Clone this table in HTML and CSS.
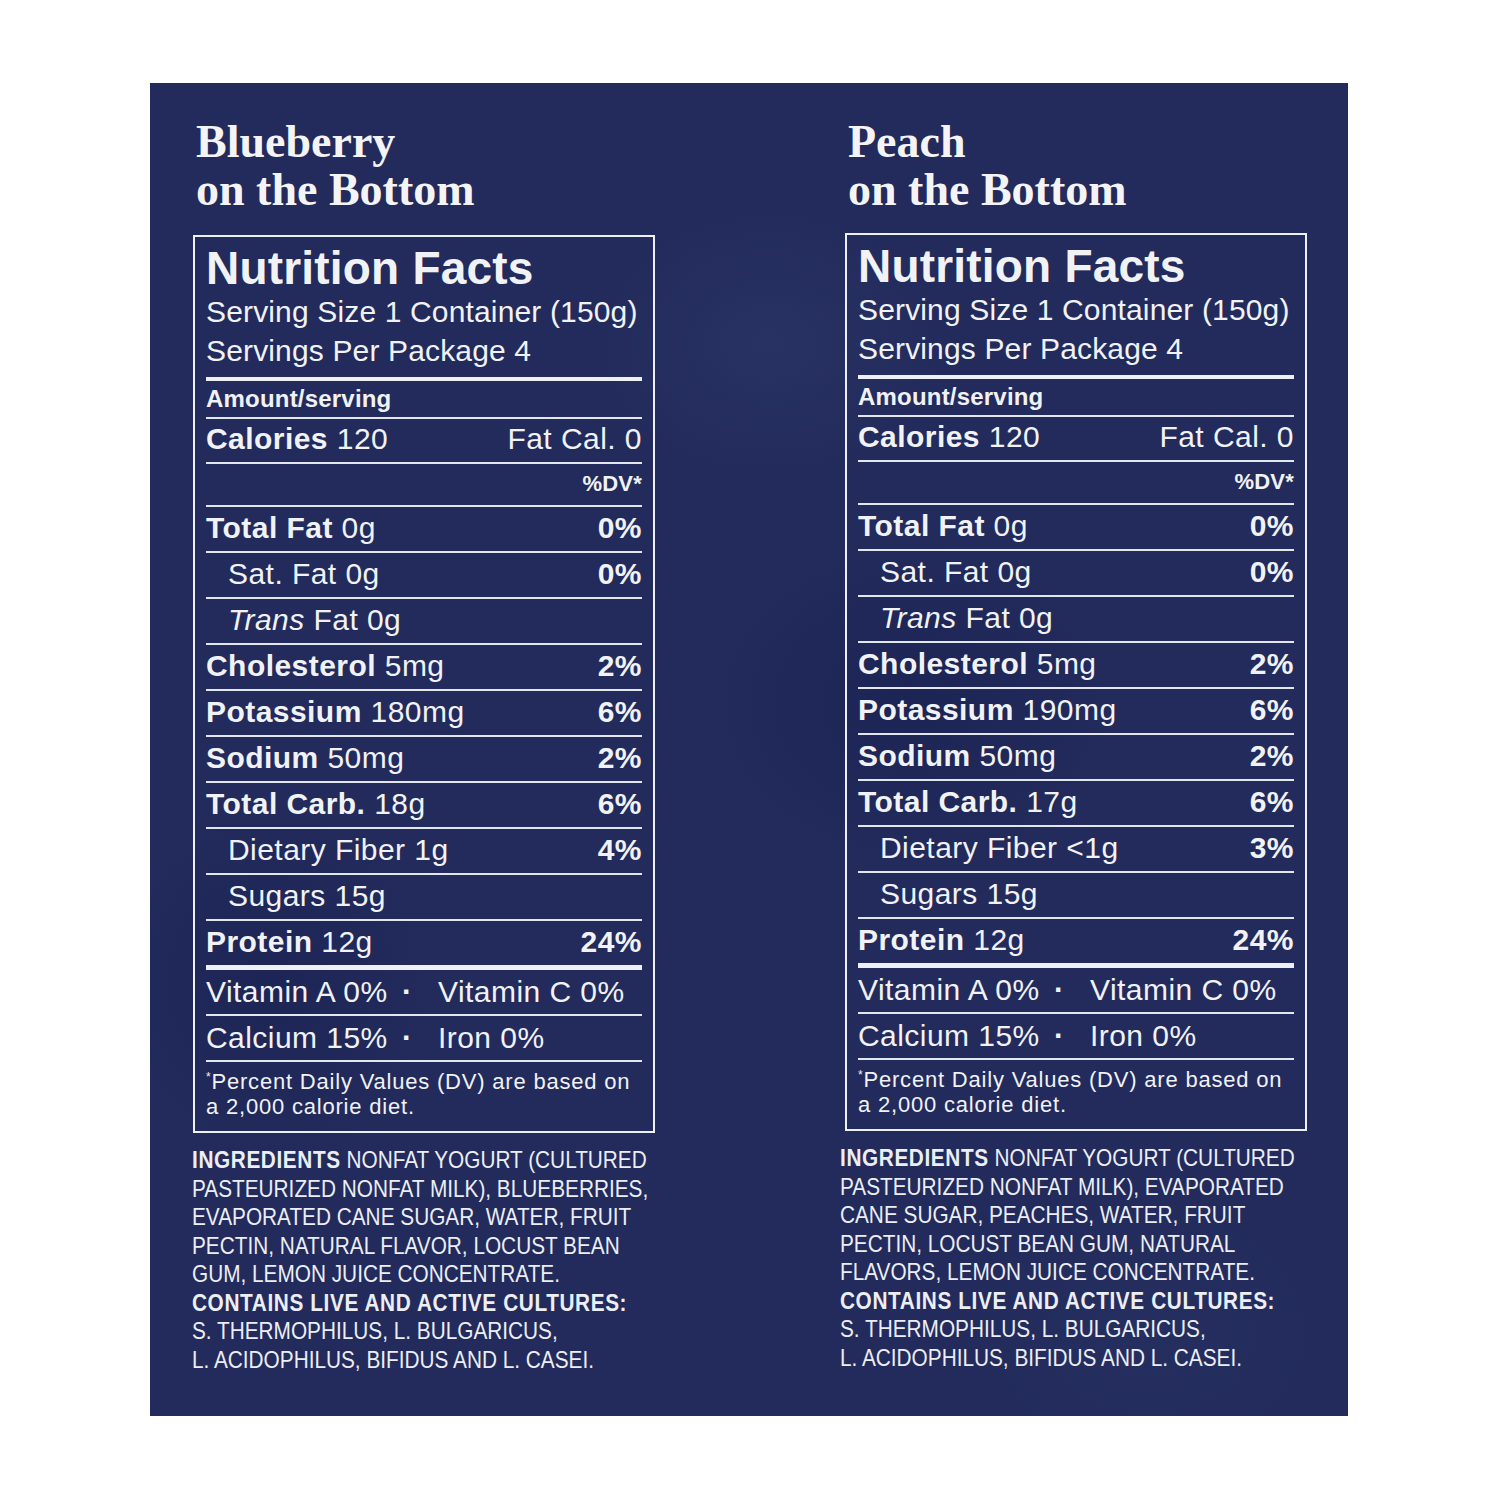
FILE: index.html
```html
<!DOCTYPE html>
<html lang="en">
<head>
<meta charset="utf-8">
<title>Nutrition Facts</title>
<link rel="stylesheet" href="styles.css">
</head>
<body>
<main class="panel">
  <section class="col">
    <h2 class="flavor">Blueberry<br>on the Bottom</h2>
    <div class="box">
      <h3 class="nf-title">Nutrition Facts</h3>
      <div class="serving">Serving Size 1 Container (150g)<br>Servings Per Package 4</div>
      <div class="row amount"><strong>Amount/serving</strong></div>
      <div class="row calories"><span><strong>Calories</strong> 120</span><span>Fat Cal. 0</span></div>
      <div class="row dv"><strong>%DV*</strong></div>
      <div class="row"><span><strong>Total Fat</strong> 0g</span><strong>0%</strong></div>
      <div class="row ind"><span>Sat. Fat 0g</span><strong>0%</strong></div>
      <div class="row ind"><span><em>Trans</em> Fat 0g</span></div>
      <div class="row"><span><strong>Cholesterol</strong> 5mg</span><strong>2%</strong></div>
      <div class="row"><span><strong>Potassium</strong> 180mg</span><strong>6%</strong></div>
      <div class="row"><span><strong>Sodium</strong> 50mg</span><strong>2%</strong></div>
      <div class="row"><span><strong>Total Carb.</strong> 18g</span><strong>6%</strong></div>
      <div class="row ind"><span>Dietary Fiber 1g</span><strong>4%</strong></div>
      <div class="row ind"><span>Sugars 15g</span></div>
      <div class="row protein"><span><strong>Protein</strong> 12g</span><strong>24%</strong></div>
      <div class="row vit"><span>Vitamin A 0%</span><span class="dot">·</span><span>Vitamin C 0%</span></div>
      <div class="row vit"><span>Calcium 15%</span><span class="dot">·</span><span>Iron 0%</span></div>
      <p class="foot"><sup>*</sup>Percent Daily Values (DV) are based on<br>a 2,000 calorie diet.</p>
    </div>
    <p class="ingr"><strong>INGREDIENTS</strong> NONFAT YOGURT (CULTURED<br>PASTEURIZED NONFAT MILK), BLUEBERRIES,<br>EVAPORATED CANE SUGAR, WATER, FRUIT<br>PECTIN, NATURAL FLAVOR, LOCUST BEAN<br>GUM, LEMON JUICE CONCENTRATE.<br><strong>CONTAINS LIVE AND ACTIVE CULTURES:</strong><br>S. THERMOPHILUS, L. BULGARICUS,<br>L. ACIDOPHILUS, BIFIDUS AND L. CASEI.</p>
  </section>

  <section class="col col-right">
    <h2 class="flavor">Peach<br>on the Bottom</h2>
    <div class="box">
      <h3 class="nf-title">Nutrition Facts</h3>
      <div class="serving">Serving Size 1 Container (150g)<br>Servings Per Package 4</div>
      <div class="row amount"><strong>Amount/serving</strong></div>
      <div class="row calories"><span><strong>Calories</strong> 120</span><span>Fat Cal. 0</span></div>
      <div class="row dv"><strong>%DV*</strong></div>
      <div class="row"><span><strong>Total Fat</strong> 0g</span><strong>0%</strong></div>
      <div class="row ind"><span>Sat. Fat 0g</span><strong>0%</strong></div>
      <div class="row ind"><span><em>Trans</em> Fat 0g</span></div>
      <div class="row"><span><strong>Cholesterol</strong> 5mg</span><strong>2%</strong></div>
      <div class="row"><span><strong>Potassium</strong> 190mg</span><strong>6%</strong></div>
      <div class="row"><span><strong>Sodium</strong> 50mg</span><strong>2%</strong></div>
      <div class="row"><span><strong>Total Carb.</strong> 17g</span><strong>6%</strong></div>
      <div class="row ind"><span>Dietary Fiber &lt;1g</span><strong>3%</strong></div>
      <div class="row ind"><span>Sugars 15g</span></div>
      <div class="row protein"><span><strong>Protein</strong> 12g</span><strong>24%</strong></div>
      <div class="row vit"><span>Vitamin A 0%</span><span class="dot">·</span><span>Vitamin C 0%</span></div>
      <div class="row vit"><span>Calcium 15%</span><span class="dot">·</span><span>Iron 0%</span></div>
      <p class="foot"><sup>*</sup>Percent Daily Values (DV) are based on<br>a 2,000 calorie diet.</p>
    </div>
    <p class="ingr"><strong>INGREDIENTS</strong> NONFAT YOGURT (CULTURED<br>PASTEURIZED NONFAT MILK), EVAPORATED<br>CANE SUGAR, PEACHES, WATER, FRUIT<br>PECTIN, LOCUST BEAN GUM, NATURAL<br>FLAVORS, LEMON JUICE CONCENTRATE.<br><strong>CONTAINS LIVE AND ACTIVE CULTURES:</strong><br>S. THERMOPHILUS, L. BULGARICUS,<br>L. ACIDOPHILUS, BIFIDUS AND L. CASEI.</p>
  </section>
</main>
</body>
</html>
```

FILE: styles.css
```css
* { box-sizing: border-box; }

html, body {
  margin: 0;
  padding: 0;
  background: #ffffff;
}

body {
  font-family: "Liberation Sans", Arial, sans-serif;
  color: #f1f2f6;
}

.panel {
  margin: 83px 0 0 150px;
  width: 1198px;
  height: 1333px;
  padding: 35px 0 0 43px;
  display: flex;
  gap: 190px;
  background-color: #222b5b;
  background-image:
    radial-gradient(ellipse 260px 200px at 620px 260px, rgba(50, 62, 112, 0.4), transparent 70%),
    radial-gradient(ellipse 300px 240px at 760px 620px, rgba(16, 24, 72, 0.35), transparent 70%),
    radial-gradient(ellipse 280px 220px at 1000px 1250px, rgba(44, 56, 104, 0.3), transparent 70%),
    radial-gradient(ellipse 240px 260px at 120px 900px, rgba(18, 26, 74, 0.35), transparent 70%);
}

.col {
  width: 462px;
  display: flex;
  flex-direction: column;
}

.flavor {
  margin: 0 0 21px 3px;
  font-family: "Liberation Serif", "Times New Roman", serif;
  font-weight: 700;
  font-size: 46px;
  line-height: 48px;
  color: #f4f4f6;
}

.box {
  border: 2px solid #eef0f5;
  padding: 8px 11px 0 11px;
}

.col-right .box {
  margin-top: -2px;
}

.nf-title {
  margin: 0;
  font-weight: 700;
  font-size: 46px;
  line-height: 46px;
  letter-spacing: 0.2px;
}

.serving {
  margin-top: 1px;
  font-size: 30px;
  line-height: 39px;
  letter-spacing: 0.15px;
  padding-bottom: 7px;
  border-bottom: 4px solid #eef0f5;
}

.row {
  display: flex;
  justify-content: space-between;
  align-items: baseline;
  font-size: 30px;
  line-height: 42px;
  letter-spacing: 0.45px;
  padding-bottom: 2px;
  border-bottom: 2px solid #e4e6ee;
  white-space: nowrap;
}

.row strong { font-weight: 700; }

.row em { font-style: italic; }

.ind { padding-left: 22px; }

.amount {
  font-size: 24px;
  line-height: 36px;
  letter-spacing: 0.2px;
  padding-bottom: 0;
}

.calories {
  line-height: 40px;
  padding-bottom: 3px;
}

.dv {
  justify-content: flex-end;
  font-size: 22px;
  line-height: 40px;
  letter-spacing: 0.2px;
  padding-bottom: 1px;
}

.protein {
  border-bottom-width: 5px;
  border-bottom-color: #eef0f5;
}

.vit {
  display: grid;
  grid-template-columns: 196px 36px 1fr;
  justify-content: start;
  align-items: start;
  line-height: 44px;
  padding-bottom: 0;
}

.dot {
  font-weight: 700;
  font-size: 30px;
}

.foot {
  margin: 0;
  padding: 7px 0 12px 0;
  font-size: 22px;
  line-height: 25px;
  letter-spacing: 0.8px;
  white-space: nowrap;
}

.foot sup {
  font-size: 12px;
  vertical-align: 8px;
  line-height: 0;
}

.ingr {
  margin: 13px 0 0 -1px;
  font-family: "Liberation Sans", Arial, sans-serif;
  font-size: 24px;
  line-height: 28.5px;
  white-space: nowrap;
  color: #eceef4;
  transform: scaleX(0.866);
  transform-origin: left top;
}

.col-right .ingr {
  margin-left: -5px;
}

.ingr strong {
  font-weight: 700;
  letter-spacing: 0.7px;
}
```
